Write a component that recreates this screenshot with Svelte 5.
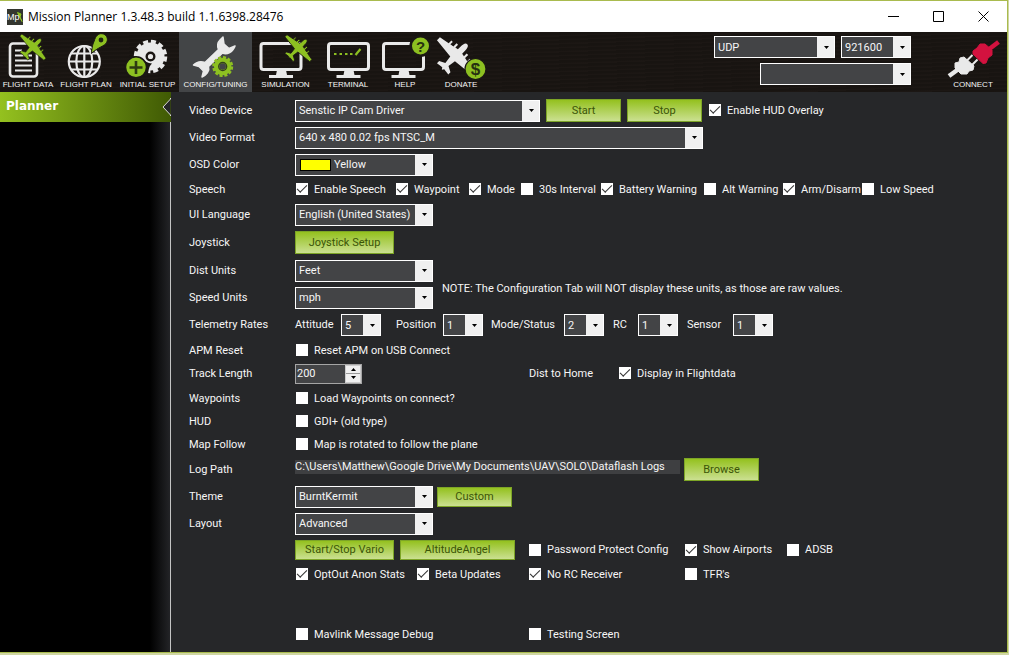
<script>
  const speech = [
    ['Enable Speech', true], ['Waypoint', true], ['Mode', true], ['30s Interval', false],
    ['Battery Warning', true], ['Alt Warning', false], ['Arm/Disarm', true], ['Low Speed', false]
  ];
  const rates = [
    ['Attitude', '5'], ['Position', '1'], ['Mode/Status', '2'], ['RC', '1'], ['Sensor', '1']
  ];
  const planePath =
    'M0 -11C1.6 -11 2.2 -9 2.2 -6V-3.6L4.4 -3.2V-6H6V-2.8L8.6 -2.3V-4.8H10V-2L17.6 -0.6V2.4L2.4 4L1.6 9.8L5.8 12V14.2L1 13.6L0 15L-1 13.6L-5.8 14.2V12L-1.6 9.8L-2.4 4L-17.6 2.4V-0.6L-10 -2V-4.8H-8.6V-2.3L-6 -2.8V-6H-4.4V-3.2L-2.2 -3.6V-6C-2.2 -9 -1.6 -11 0 -11Z';
  let trackLength = $state(200);
</script>

{#snippet combo(id, label, value, cls = '')}
  <span class="combo {cls}">
    {#if cls === 'color'}<span class="swatch"></span>{/if}
    <select {id} aria-label={label}><option>{value}</option></select>
    <span class="arrow" aria-hidden="true"><svg width="5" height="3" viewBox="0 0 5 3"><path d="M0 0H5L2.5 3Z" /></svg></span>
  </span>
{/snippet}

{#snippet check(text, checked)}
  <label class="check"><input type="checkbox" {checked} /><span>{text}</span></label>
{/snippet}

{#snippet monitor(x)}
  <rect x={x} y="43.5" width="40" height="26" rx="2.5" fill="none" stroke="#e9e9e9" stroke-width="3" />
  <path d="M{x + 16} 70H{x + 25}L{x + 26} 75H{x + 32}V78H{x + 8}V75H{x + 15}Z" fill="#e9e9e9" />
{/snippet}

<div class="window">
  <header class="titlebar">
    <svg class="logo" width="16" height="16" viewBox="0 0 16 16" aria-hidden="true">
      <rect width="16" height="16" fill="#34362f" />
      <path d="M10.500 3.500L15 12.500L13 8L14 5Z" fill="#8cc21f" stroke="#8cc21f" />
      <text x="0" y="11" font-size="9" fill="#fff">Mp</text>
    </svg>
    <h1>Mission Planner 1.3.48.3 build 1.1.6398.28476</h1>
    <div class="controls">
      <button aria-label="Minimize"><svg width="11" height="11" viewBox="0 0 11 11"><path d="M0 5.5H11" /></svg></button>
      <button aria-label="Maximize"><svg width="11" height="11" viewBox="0 0 11 11"><path d="M.5 .5H10.500V10.500H.5Z" /></svg></button>
      <button aria-label="Close"><svg width="11" height="11" viewBox="0 0 11 11"><path d="M.5 .5L10.500 10.500M10.500 .5L.5 10.500" /></svg></button>
    </div>
  </header>

  <div class="toolbar">
    <nav>
      <button>
        <svg viewBox="0 32 56 48">
          <rect x="10" y="43.500" width="27" height="33" rx="3" fill="none" stroke="#e9e9e9" stroke-width="2.600" />
          <path d="M15 50.500H22M15 55.500H32M15 60.500H32M15 65.500H32M15 70.500H32" stroke="#e9e9e9" stroke-width="2.200" />
          <path d={planePath} transform="translate(33.5 46.5) rotate(45) scale(.97)" fill="#8dc021" stroke="#1a1714" stroke-width=".6" />
        </svg>
        <span>FLIGHT DATA</span>
      </button>
      <button>
        <svg viewBox="56 32 60 48">
          <g fill="none" stroke="#e9e9e9" stroke-width="2.200">
            <circle cx="84.300" cy="61.500" r="15.500" />
            <ellipse cx="84.300" cy="61.500" rx="8" ry="15.500" />
            <path d="M84.300 46V77M69 61.500H100M71.500 53.500H97M71.500 69.500H97" />
          </g>
          <path d="M91.500 53.500C92 46 93 44 94.200 41C95.500 36 98.500 33.300 102 33.700C106.500 34.200 108.500 38.500 106.800 42.200C104.500 46.500 98 47 91.500 53.500Z" fill="#8dc021" stroke="#1a1714" stroke-width="1" />
          <circle cx="101" cy="40" r="2.400" fill="#1d2311" />
        </svg>
        <span>FLIGHT PLAN</span>
      </button>
      <button>
        <svg viewBox="116 32 63 48">
          <circle cx="150.500" cy="56.500" r="14.500" fill="none" stroke="#e9e9e9" stroke-width="4.500" stroke-dasharray="4.800 2.790" />
          <circle cx="150.500" cy="56.500" r="9.500" fill="none" stroke="#e9e9e9" stroke-width="9" />
          <path d="M138 57C141 55 142 62 152 63.500C148 67 149 72 147 76H134Z" fill="#1a1714" />
          <circle cx="150.500" cy="56.500" r="2.600" fill="#e9e9e9" />
          <circle cx="136" cy="67.300" r="10.500" fill="#8dc021" stroke="#1a1714" stroke-width="1.500" />
          <path d="M136 61V74M129.500 67.500H142.500" stroke="#2d3a12" stroke-width="2.600" />
        </svg>
        <span>INITIAL SETUP</span>
      </button>
      <button class="active">
        <svg viewBox="179 32 73 48">
          <path d="M223 37L220 40C217 43 217.500 47 218.500 49.500L205 62.500C201 61 197 61.500 193.500 65L199 66.500L203.500 71L202 77C206 75.500 210 71 208.500 66.500L222.500 53C227 55 233 52 235 46L229 48.500L224 44Z" fill="#e9e9e9" stroke="#e9e9e9" stroke-width="1.500" stroke-linejoin="round" />
          <circle cx="222.700" cy="66.500" r="9" fill="none" stroke="#8dc021" stroke-width="3" stroke-dasharray="3 1.712" />
          <circle cx="222.700" cy="66.500" r="6" fill="none" stroke="#8dc021" stroke-width="5.500" />
          <circle cx="222.700" cy="66.500" r="4" fill="none" stroke="#33401c" stroke-width="1.300" />
        </svg>
        <span>CONFIG/TUNING</span>
      </button>
      <button>
        <svg viewBox="252 32 67 48">
          {@render monitor(261)}
          <path d={planePath} transform="translate(299 47.5) rotate(45)" fill="#8dc021" stroke="#1a1714" stroke-width=".8" />
        </svg>
        <span>SIMULATION</span>
      </button>
      <button>
        <svg viewBox="319 32 58 48">
          {@render monitor(328.5)}
          <path d="M334 54H336.500M339.500 54H342M345 54H347.500M350 54H352.500" stroke="#8dc021" stroke-width="2.200" />
          <path d="M355.500 55L360.500 49" stroke="#8dc021" stroke-width="2.200" />
        </svg>
        <span>TERMINAL</span>
      </button>
      <button>
        <svg viewBox="377 32 56 48">
          {@render monitor(383.5)}
          <circle cx="420.500" cy="46" r="9.800" fill="#8dc021" stroke="#1a1714" stroke-width="2.600" />
          <text x="420.500" y="51.500" text-anchor="middle" font-size="15" font-weight="700" fill="#263010">?</text>
        </svg>
        <span>HELP</span>
      </button>
      <button>
        <svg viewBox="433 32 56 48">
          <path d={planePath} transform="translate(456.5 55) rotate(45) scale(1.38)" fill="#e9e9e9" />
          <circle cx="475.500" cy="69" r="10.500" fill="#8dc021" stroke="#1a1714" stroke-width="1.200" />
          <text x="475.500" y="75" text-anchor="middle" font-size="17" font-weight="700" fill="#263010">$</text>
        </svg>
        <span>DONATE</span>
      </button>
    </nav>
    <div class="link">
      {@render combo('port', 'Port', 'UDP', 'port')}
      {@render combo('baud', 'Baud rate', '921600', 'baud')}
      {@render combo('sysid', 'Vehicle', '', 'vehicle')}
    </div>
    <button class="connect">
      <svg viewBox="943 32 60 48">
        <path d="M949 76L958 69.500" stroke="#e9e9e9" stroke-width="4.500" />
        <path d="M955 63L959 62L960 58L964 57L974 66L973 70L969 71L967 74H961L955 68Z" fill="#e9e9e9" stroke="#e9e9e9" />
        <path d="M967 60.500L972.500 55M972 65L977.500 59.500" stroke="#e9e9e9" stroke-width="2" />
        <path d="M973 51L977 48L980 44H985L992 50V55L988 58L986 63L983 63.500L973 54Z" fill="#d3123f" stroke="#d3123f" />
        <path d="M988 50L998.500 42" stroke="#d3123f" stroke-width="4.500" />
      </svg>
      <span>CONNECT</span>
    </button>
  </div>

  <div class="body">
    <aside>
      <button class="tab">
        Planner
        <svg class="notch" width="9" height="18" viewBox="0 0 9 18" aria-hidden="true"><path d="M8.500 0V1L1 9L8.500 17V18" /></svg>
      </button>
    </aside>

    <main>
      <div class="row">
        <label for="vdev">Video Device</label>
        <div class="field">
          {@render combo('vdev', 'Video Device', 'Senstic IP Cam Driver', 'wide')}
          <button class="btn b75">Start</button>
          <button class="btn b75">Stop</button>
          {@render check('Enable HUD Overlay', true)}
        </div>
      </div>
      <div class="row">
        <label for="vfmt">Video Format</label>
        <div class="field">{@render combo('vfmt', 'Video Format', '640 x 480 0.02 fps NTSC_M', 'widest')}</div>
      </div>
      <div class="row">
        <label for="osd">OSD Color</label>
        <div class="field">{@render combo('osd', 'OSD Color', 'Yellow', 'color')}</div>
      </div>
      <div class="row short">
        <span>Speech</span>
        <div class="speech">
          {#each speech as [t, c]}{@render check(t, c)}{/each}
        </div>
      </div>
      <div class="row">
        <label for="lang">UI Language</label>
        <div class="field">{@render combo('lang', 'UI Language', 'English (United States)')}</div>
      </div>
      <div class="row tall">
        <span>Joystick</span>
        <div class="field"><button class="btn b99">Joystick Setup</button></div>
      </div>
      <div class="units">
        <div>
          <div class="row">
            <label for="dist">Dist Units</label>
            <div class="field">{@render combo('dist', 'Dist Units', 'Feet')}</div>
          </div>
          <div class="row">
            <label for="speed">Speed Units</label>
            <div class="field">{@render combo('speed', 'Speed Units', 'mph')}</div>
          </div>
        </div>
        <p>NOTE: The Configuration Tab will NOT display these units, as those are raw values.</p>
      </div>
      <div class="row rate-row">
        <span>Telemetry Rates</span>
        <div class="rates">
          {#each rates as [t, v]}
            <label for={'rate' + t}>{t}</label>
            {@render combo('rate' + t, t, v, 'tiny')}
          {/each}
        </div>
      </div>
      <div class="row short">
        <span>APM Reset</span>
        {@render check('Reset APM on USB Connect', false)}
      </div>
      <div class="row short">
        <label for="track">Track Length</label>
        <div class="track">
          <span class="spin">
            <input id="track" type="text" inputmode="numeric" bind:value={trackLength} />
            <span class="steps">
              <button aria-label="Increase" onclick={() => trackLength++}><svg width="5" height="3" viewBox="0 0 5 3"><path d="M0 3H5L2.500 0Z" /></svg></button>
              <button aria-label="Decrease" onclick={() => trackLength--}><svg width="5" height="3" viewBox="0 0 5 3"><path d="M0 0H5L2.500 3Z" /></svg></button>
            </span>
          </span>
          <span>Dist to Home</span>
          {@render check('Display in Flightdata', true)}
        </div>
      </div>
      <div class="row short spaced">
        <span>Waypoints</span>
        {@render check('Load Waypoints on connect?', false)}
      </div>
      <div class="row short">
        <span>HUD</span>
        {@render check('GDI+ (old type)', false)}
      </div>
      <div class="row short">
        <span>Map Follow</span>
        {@render check('Map is rotated to follow the plane', false)}
      </div>
      <div class="row">
        <label for="log">Log Path</label>
        <div class="log">
          <input id="log" type="text" value={'C:\\Users\\Matthew\\Google Drive\\My Documents\\UAV\\SOLO\\Dataflash Logs'} />
          <button class="btn b75">Browse</button>
        </div>
      </div>
      <div class="row">
        <label for="theme">Theme</label>
        <div class="theme">
          {@render combo('theme', 'Theme', 'BurntKermit')}
          <button class="btn b75 low">Custom</button>
        </div>
      </div>
      <div class="row">
        <label for="layout">Layout</label>
        <div class="field">{@render combo('layout', 'Layout', 'Advanced')}</div>
      </div>
      <div class="extras top">
        <button class="btn low b99">Start/Stop Vario</button>
        <button class="btn low b115">AltitudeAngel</button>
        {@render check('Password Protect Config', false)}
        {@render check('Show Airports', true)}
        {@render check('ADSB', false)}
      </div>
      <div class="extras mid">
        {@render check('OptOut Anon Stats', true)}
        {@render check('Beta Updates', true)}
        {@render check('No RC Receiver', true)}
        {@render check("TFR's", false)}
      </div>
      <div class="extras last">
        {@render check('Mavlink Message Debug', false)}
        {@render check('Testing Screen', false)}
      </div>
    </main>
  </div>
</div>

<style>
  :global(body) { margin: 0; background: #cfd6a2; }
  .window, .window * { box-sizing: border-box; }
  .window {
    display: flex; flex-direction: column; min-height: calc(100vh - 2px);
    margin: 0 1px 2px 0; border: solid #a9bb4e; border-width: 1px 1px 1px 0;
    background: #262729; color: #f6f6f6;
    font: 11px/14px Roboto, "Liberation Sans", sans-serif;
  }
  button, input, select { font: inherit; color: inherit; margin: 0; padding: 0; border: 0; background: none; border-radius: 0; }
  svg { display: block; }

  .titlebar { display: flex; align-items: center; height: 31px; padding: 0 1px 0 7px; background: #fff; color: #000; }
  h1 { margin: 0 0 0 5px; font: 12px/16px "Noto Sans", "Open Sans", sans-serif; white-space: nowrap; }
  .titlebar h1 { font-family: "Open Sans", sans-serif; }
  .logo text { font-family: "Liberation Sans", sans-serif; }
  .controls { display: flex; margin-left: auto; }
  .controls button { display: grid; place-items: center; width: 45px; height: 30px; }
  .controls path { fill: none; stroke: #000; }

  .toolbar {
    display: flex; height: 60px;
    background: repeating-linear-gradient(178deg, #181411 0 2px, #1c1714 3px 4px);
  }
  nav { display: grid; grid-template-columns: 56px 60px 63px 73px 67px 58px 56px 56px; margin-right: auto; }
  nav button, .connect { display: flex; flex-direction: column; align-items: center; }
  nav span, .connect span { font: 8px/9px "Liberation Sans", Arial, sans-serif; white-space: nowrap; }
  nav svg, .connect svg { width: 100%; height: 48px; font-family: "Liberation Sans", sans-serif; }
  nav .active { background: #434547; }
  .link { display: grid; grid-template-columns: 46px 81px 70px; align-content: start; row-gap: 5px; padding-top: 4px; }
  .connect { width: 60px; margin: 0 4px 0 32px; }

  .combo { position: relative; display: flex; align-items: center; width: 138px; height: 22px; border: 1px solid #fff; background: #434446; }
  .combo select { flex: 1; min-width: 0; height: 20px; padding: 1px 18px 0 3px; appearance: none; outline: 0; }
  .combo option { background: #434446; }
  .arrow { position: absolute; inset: 0 0 0 auto; display: grid; place-items: center; width: 17px; padding-left: 1px; background: #f0f0f0; pointer-events: none; }
  .wide { width: 245px; }
  .widest { width: 408px; }
  .tiny { width: 40px; }
  .port { grid-column: 1 / 3; width: 121px; }
  .baud { width: 70px; }
  .vehicle { grid-column: 2 / 4; width: 151px; }
  .swatch { width: 31px; height: 12px; margin-left: 4px; border: 1px solid #000; background: #ff0; }

  .body { display: flex; flex: 1; }
  aside { width: 171px; border-right: 1px solid #c4c4c4; background: linear-gradient(90deg, #000 150px, #232427 170px); }
  .tab {
    position: relative; width: 171px; height: 30px; padding: 0 0 2px 6px; text-align: left; color: #fff;
    font: bold 12px/16px "DejaVu Sans", Verdana, sans-serif;
    background: linear-gradient(90deg, #94c11f, #405a04);
  }
  .notch { position: absolute; right: 0; top: 6px; }
  .notch path { fill: #262729; stroke: #d8d8d8; }

  main { flex: 1; padding: 5px 8px 0 18px; }
  .row { display: grid; grid-template-columns: 106px 1fr; align-items: center; height: 27px; white-space: nowrap; }
  .short { height: 23px; }
  .tall { height: 29px; }
  .rate-row { height: 28px; }
  .spaced { margin-top: 2px; }
  .field { display: flex; align-items: center; gap: 6px; }
  .theme, .log { display: flex; align-items: center; gap: 4px; }
  .check { display: flex; align-items: center; gap: 6px; white-space: nowrap; }
  .check input { display: grid; place-items: center; width: 13px; height: 13px; border: solid #262729; border-width: 0 0 1px 1px; background: #fff; appearance: none; }
  .check input:checked::before {
    content: ""; width: 9px; height: 4px; margin-top: -3px;
    border: solid #333; border-width: 0 0 1px 1px; transform: rotate(-45deg);
  }
  .speech { display: grid; grid-template-columns: 100px 73px 52px 80px 103px 79px 79px auto; }
  .rates { display: grid; grid-template-columns: 46px 55px 47px 48px 73px 49px 25px 49px 46px 40px; align-items: center; }
  .track { display: grid; grid-template-columns: 234px 89px auto; align-items: center; }
  .units { display: flex; gap: 9px; }
  .units p { margin: 25px 0 0; }

  .btn {
    height: 23px; border: 1px solid #7da526; color: #3b5408;
    background: linear-gradient(#94c11f, #cbe091);
  }
  .low { height: 20px; }
  .b75 { width: 75px; }
  .b99 { width: 99px; }
  .b115 { width: 115px; }

  .spin { display: flex; width: 67px; height: 20px; border: 1px solid #a5a5a5; background: #434446; }
  .spin input { flex: 1; min-width: 0; padding-left: 1px; }
  .steps { display: grid; gap: 1px; width: 16px; background: #999; border: 1px solid #ccc; }
  .steps button { display: grid; place-items: center; background: #f0f0f0; }
  .log input { width: 385px; height: 14px; margin-bottom: 5px; background: #3e3f41; }

  .extras { display: grid; align-items: center; margin-left: 106px; }
  .top { grid-template-columns: 105px 128px 156px 102px auto; height: 26px; }
  .mid { grid-template-columns: 121px 112px 156px auto; height: 23px; }
  .last { grid-template-columns: 233px auto; height: 23px; margin-top: 37px; }
</style>
